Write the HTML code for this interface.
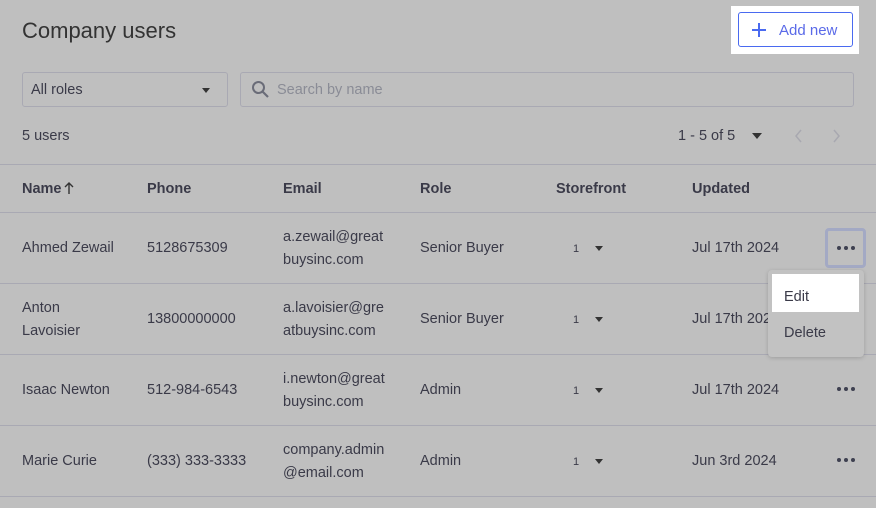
<!DOCTYPE html>
<html><head><meta charset="utf-8"><style>
*{margin:0;padding:0;box-sizing:border-box}
body{width:876px;height:508px;background:#bfbfbf;font-family:"Liberation Sans",sans-serif;color:#3a3a48;position:relative;overflow:hidden;font-size:14.5px}
.a{position:absolute;white-space:nowrap;line-height:21px}
.line{position:absolute;left:0;width:876px;height:1px;background:#a9a9b3}
.h{font-weight:bold;font-size:14.5px}
.two{line-height:23px;margin-top:1px}
.dots{position:absolute;width:18px;height:4px}
.dots i{position:absolute;top:0;width:4px;height:4px;border-radius:50%;background:#3e4050}
.caret{position:absolute;width:0;height:0;border-left:4px solid transparent;border-right:4px solid transparent;border-top:5px solid #333}
.sf{font-size:11px}
</style></head><body>
<div class="a" style="left:22px;top:17px;font-size:22px;line-height:28px;color:#333">Company users</div>
<div class="a" style="left:731px;top:6px;width:128px;height:48px;background:#fff"></div>
<div class="a" style="left:738px;top:12px;width:115px;height:35px;border:1px solid #4a6af0;border-radius:3px"></div>
<svg class="a" style="left:751px;top:22px" width="16" height="16"><path d="M8 1V15M1 8H15" stroke="#4a6af0" stroke-width="2"/></svg>
<div class="a" style="left:779px;top:20px;color:#5a6ae8;font-size:15px">Add new</div>

<div class="a" style="left:22px;top:72px;width:206px;height:35px;border:1px solid #a9a9b3;border-radius:3px"></div>
<div class="a" style="left:31px;top:80px">All roles</div>
<div class="caret" style="left:202px;top:88px"></div>
<div class="a" style="left:240px;top:72px;width:614px;height:35px;border:1px solid #a9a9b3;border-radius:3px"></div>
<svg class="a" style="left:251px;top:80px" width="20" height="20"><circle cx="7.5" cy="7.5" r="5.5" fill="none" stroke="#6a6c78" stroke-width="2"/><path d="M11.5 11.5L17 17" stroke="#6a6c78" stroke-width="2.2"/></svg>
<div class="a" style="left:277px;top:80px;color:#8a8c96">Search by name</div>

<div class="a" style="left:22px;top:126px">5 users</div>
<div class="a" style="left:678px;top:126px">1 - 5 of 5</div>
<div class="caret" style="left:752px;top:133px;border-left-width:5px;border-right-width:5px;border-top-width:6px"></div>
<svg class="a" style="left:794px;top:129px" width="10" height="14"><path d="M7 1L2 7L7 13" fill="none" stroke="#a8a8b0" stroke-width="1.5"/></svg>
<svg class="a" style="left:831px;top:129px" width="10" height="14"><path d="M3 1L8 7L3 13" fill="none" stroke="#a8a8b0" stroke-width="1.5"/></svg>

<div class="line" style="top:164px"></div>
<div class="a h" style="left:22px;top:179px">Name</div>
<svg class="a" style="left:64px;top:181px" width="10" height="14"><path d="M5 13V2M1 6L5 2L9 6" fill="none" stroke="#333" stroke-width="1.4"/></svg>
<div class="a h" style="left:147px;top:179px">Phone</div>
<div class="a h" style="left:283px;top:179px">Email</div>
<div class="a h" style="left:420px;top:179px">Role</div>
<div class="a h" style="left:556px;top:179px">Storefront</div>
<div class="a h" style="left:692px;top:179px">Updated</div>
<div class="line" style="top:212px"></div>

<!-- row1 -->
<div class="a" style="left:22px;top:238px">Ahmed Zewail</div>
<div class="a" style="left:147px;top:238px">5128675309</div>
<div class="a two" style="left:283px;top:225px">a.zewail@great<br>buysinc.com</div>
<div class="a" style="left:420px;top:238px">Senior Buyer</div>
<div class="a sf" style="left:573px;top:239px">1</div><div class="caret" style="left:595px;top:246px"></div>
<div class="a" style="left:692px;top:238px">Jul 17th 2024</div>
<div class="a" style="left:825px;top:228px;width:41px;height:40px;border:3px solid #a3a9c4;border-radius:4px"></div>
<div class="dots" style="left:837px;top:246px"><i style="left:0"></i><i style="left:7px"></i><i style="left:14px"></i></div>
<div class="line" style="top:283px"></div>

<!-- row2 -->
<div class="a two" style="left:22px;top:296px">Anton<br>Lavoisier</div>
<div class="a" style="left:147px;top:309px">13800000000</div>
<div class="a two" style="left:283px;top:296px">a.lavoisier@gre<br>atbuysinc.com</div>
<div class="a" style="left:420px;top:309px">Senior Buyer</div>
<div class="a sf" style="left:573px;top:310px">1</div><div class="caret" style="left:595px;top:317px"></div>
<div class="a" style="left:692px;top:309px">Jul 17th 2024</div>
<div class="line" style="top:354px"></div>

<!-- row3 -->
<div class="a" style="left:22px;top:380px">Isaac Newton</div>
<div class="a" style="left:147px;top:380px">512-984-6543</div>
<div class="a two" style="left:283px;top:367px">i.newton@great<br>buysinc.com</div>
<div class="a" style="left:420px;top:380px">Admin</div>
<div class="a sf" style="left:573px;top:381px">1</div><div class="caret" style="left:595px;top:388px"></div>
<div class="a" style="left:692px;top:380px">Jul 17th 2024</div>
<div class="dots" style="left:837px;top:387px"><i style="left:0"></i><i style="left:7px"></i><i style="left:14px"></i></div>
<div class="line" style="top:425px"></div>

<!-- row4 -->
<div class="a" style="left:22px;top:451px">Marie Curie</div>
<div class="a" style="left:147px;top:451px">(333) 333-3333</div>
<div class="a two" style="left:283px;top:438px">company.admin<br>@email.com</div>
<div class="a" style="left:420px;top:451px">Admin</div>
<div class="a sf" style="left:573px;top:452px">1</div><div class="caret" style="left:595px;top:459px"></div>
<div class="a" style="left:692px;top:451px">Jun 3rd 2024</div>
<div class="dots" style="left:837px;top:458px"><i style="left:0"></i><i style="left:7px"></i><i style="left:14px"></i></div>
<div class="line" style="top:496px"></div>

<!-- menu -->
<div class="a" style="left:768px;top:270px;width:96px;height:87px;background:#c2c2c2;border-radius:4px;box-shadow:0 1px 4px rgba(0,0,0,.18)"></div>
<div class="a" style="left:772px;top:274px;width:87px;height:38px;background:#fff"></div>
<div class="a" style="left:784px;top:287px">Edit</div>
<div class="a" style="left:784px;top:323px">Delete</div>
</body></html>
